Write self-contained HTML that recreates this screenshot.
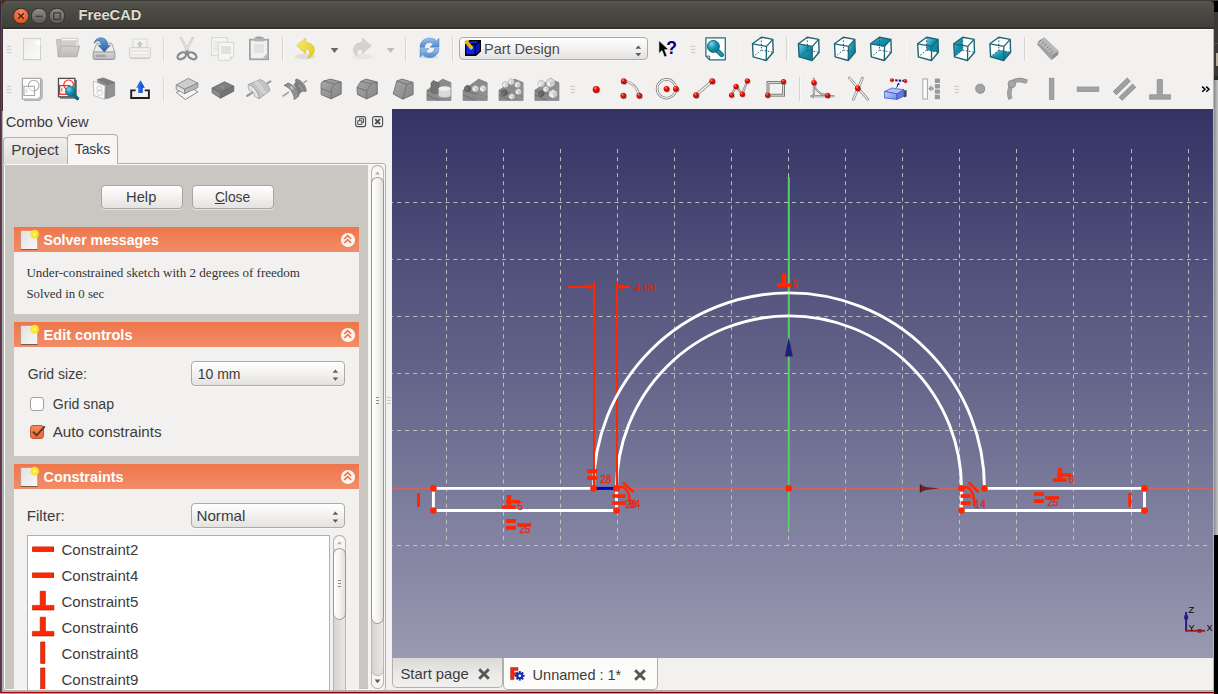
<!DOCTYPE html>
<html lang="en"><head><meta charset="utf-8"><title>FreeCAD</title>
<style>
html,body{margin:0;padding:0}
body{width:1218px;height:694px;overflow:hidden;position:relative;background:#3c3b37;font-family:"Liberation Sans",sans-serif;color:#3c3c3c}
.a{position:absolute;display:block}
.t{position:absolute;white-space:nowrap;line-height:1;font-family:"Liberation Sans",sans-serif}
.sf{font-family:"Liberation Serif",serif}
svg{overflow:visible}
.btn{position:absolute;border:1px solid #a9a6a0;border-radius:4px;background:linear-gradient(#ffffff,#f4f3f2 45%,#e4e2e0);box-sizing:border-box;box-shadow:0 1px 0 rgba(255,255,255,.5)}
.hdr{position:absolute;background:linear-gradient(#ee764a,#f28d68)}
.tb{position:absolute;background:#f2f1f0}
.sep{position:absolute;width:1px;background:#d6d4d1;box-shadow:1px 0 0 #fbfbfa}

</style></head>
<body>
<div class="a" style="left:0px;top:1px;width:1px;height:693px;background:linear-gradient(#33223c,#4e2c43 6%,#5b3045 25%,#5b3045)"></div>
<div class="a" style="left:1px;top:1px;width:1px;height:692px;background:#b52428"></div>
<div class="a" style="left:2px;top:1px;width:6px;height:6px;background:linear-gradient(135deg,#6a0000,#c00000)"></div>
<div class="a" style="left:1208px;top:1px;width:6px;height:6px;background:linear-gradient(225deg,#6a0000,#c00000)"></div>
<div class="a" style="left:2px;top:29px;width:1px;height:82px;background:#3a3330"></div>
<div class="a" style="left:2px;top:111px;width:1px;height:581px;background:#a9afab"></div>
<div class="a" style="left:1214px;top:1px;width:4px;height:11px;background:#000"></div>
<div class="a" style="left:1214px;top:12px;width:4px;height:68px;background:#3a3935"></div>
<div class="a" style="left:1214px;top:43px;width:4px;height:1px;background:#55544f"></div>
<div class="a" style="left:1214px;top:76px;width:4px;height:4px;background:#2a2926"></div>
<div class="a" style="left:1216px;top:53px;width:2px;height:13px;background:#b9ae9c"></div>
<div class="a" style="left:1214px;top:80px;width:4px;height:455px;background:linear-gradient(90deg,#8a8a8a,#c8c8c8)"></div>
<div class="a" style="left:1214px;top:535px;width:4px;height:159px;background:#000"></div>
<div class="a" style="left:2px;top:690px;width:1212px;height:2px;background:#adb1ad"></div>
<div class="a" style="left:1px;top:692px;width:1213px;height:1px;background:linear-gradient(90deg,#c00000,#8a0000 10%,#800000)"></div>
<div class="a" style="left:0px;top:693px;width:1214px;height:1px;background:#9aa6a6"></div>
<div class="a" style="left:2px;top:1px;width:1212px;height:28px;border-radius:5px 5px 0 0;background:linear-gradient(#4a4943,#5b5a54 4%,#504f49 10%,#403f3a 92%,#2e2d29 97%);"></div>
<svg class="a" style="left:12.399999999999999px;top:7.100000000000001px;" width="18" height="18" viewBox="0 0 18 18"><defs><radialGradient id="gc" cx="50%" cy="30%" r="70%"><stop offset="0" stop-color="#f58d6b"/><stop offset="1" stop-color="#df4f1d"/></radialGradient></defs><circle cx="9" cy="9" r="8.2" fill="#33322e"/><circle cx="9" cy="9" r="7.3" fill="url(#gc)"/><path d="M6.2 6.2 L11.8 11.8 M11.8 6.2 L6.2 11.8" stroke="#4a1c0c" stroke-width="1.25" fill="none"/></svg>
<svg class="a" style="left:30.4px;top:7.100000000000001px;" width="18" height="18" viewBox="0 0 18 18"><defs><linearGradient id="gmin" x1="0" y1="0" x2="0" y2="1"><stop offset="0" stop-color="#8d8c86"/><stop offset="1" stop-color="#5b5a55"/></linearGradient></defs><circle cx="9" cy="9" r="8.2" fill="#33322e"/><circle cx="9" cy="9" r="7.3" fill="url(#gmin)"/><path d="M5.6 9.3 H12.4" stroke="#3a3935" stroke-width="1.2" fill="none"/></svg>
<svg class="a" style="left:48.4px;top:7.100000000000001px;" width="18" height="18" viewBox="0 0 18 18"><defs><linearGradient id="gmax" x1="0" y1="0" x2="0" y2="1"><stop offset="0" stop-color="#8d8c86"/><stop offset="1" stop-color="#5b5a55"/></linearGradient></defs><circle cx="9" cy="9" r="8.2" fill="#33322e"/><circle cx="9" cy="9" r="7.3" fill="url(#gmax)"/><rect x="5.7" y="5.9" width="6.6" height="6.4" stroke="#3a3935" stroke-width="1.2" fill="none"/></svg>
<div class="t" style="left:78.60px;top:8px;font-size:14.7px;color:#dfdbd2;font-weight:bold;text-shadow:0 -1px 0 #2a2926;">FreeCAD</div>
<div class="a" style="left:3px;top:29px;width:1210px;height:661px;background:#f2f1f0;border-top:1px solid #fff;box-sizing:border-box"></div>
<div class="a" style="left:1213px;top:29px;width:1px;height:661px;background:#b7b5b1"></div>
<svg class="a" style="left:0px;top:0px;" width="1218" height="110" viewBox="0 0 1218 110"><defs>
<linearGradient id="gPaper" x1="0" y1="0" x2="1" y2="1"><stop offset="0" stop-color="#eeedec"/><stop offset="1" stop-color="#fafaf9"/></linearGradient>
<radialGradient id="gGlow"><stop offset="0" stop-color="#fff"/><stop offset=".4" stop-color="#fff" stop-opacity=".85"/><stop offset="1" stop-color="#fff" stop-opacity="0"/></radialGradient><linearGradient id="gFold" x1="0" y1="0" x2="0" y2="1"><stop offset="0" stop-color="#d2d1cf"/><stop offset="1" stop-color="#bcbbb9"/></linearGradient>
<linearGradient id="gBlueA" x1="0" y1="0" x2="0" y2="1"><stop offset="0" stop-color="#6f9fd8"/><stop offset="1" stop-color="#2a5ea8"/></linearGradient>
<linearGradient id="gRef" x1="0" y1="0" x2="0" y2="1"><stop offset="0" stop-color="#9cc0ea"/><stop offset="1" stop-color="#4d86cc"/></linearGradient>
<linearGradient id="gYel" x1="0" y1="0" x2="1" y2="1"><stop offset="0" stop-color="#f6ec78"/><stop offset="1" stop-color="#e2c914"/></linearGradient>
<linearGradient id="gTeal" x1="0" y1="0" x2="1" y2="1"><stop offset="0" stop-color="#7fd0f0"/><stop offset=".45" stop-color="#1792ae"/><stop offset="1" stop-color="#087c96"/></linearGradient>
<radialGradient id="gLens" cx="35%" cy="30%" r="75%"><stop offset="0" stop-color="#7fd4f2"/><stop offset=".5" stop-color="#1a94b0"/><stop offset="1" stop-color="#0b6f86"/></radialGradient>
<radialGradient id="gRed" cx="38%" cy="32%" r="70%"><stop offset="0" stop-color="#ff9a8a"/><stop offset=".35" stop-color="#f01808"/><stop offset="1" stop-color="#b00000"/></radialGradient>
<linearGradient id="gDrive" x1="0" y1="0" x2="0" y2="1"><stop offset="0" stop-color="#dcdcdc"/><stop offset="1" stop-color="#b4b4b4"/></linearGradient>
<linearGradient id="gUp" x1="0" y1="0" x2="1" y2="0"><stop offset="0" stop-color="#3a8af8"/><stop offset="1" stop-color="#0438b8"/></linearGradient>
<linearGradient id="gBox" x1="0" y1="0" x2="1" y2="1"><stop offset="0" stop-color="#c4d4fa"/><stop offset="1" stop-color="#6c8ae0"/></linearGradient>
<linearGradient id="gG1" x1="0" y1="0" x2="1" y2="1"><stop offset="0" stop-color="#a8a8a8"/><stop offset="1" stop-color="#858585"/></linearGradient>
</defs><rect x="6.8" y="45.8" width="4.4" height="1.2" fill="#cfcdca"/><rect x="6.8" y="48.9" width="4.4" height="1.2" fill="#cfcdca"/><rect x="6.8" y="52.0" width="4.4" height="1.2" fill="#cfcdca"/><rect x="6.8" y="85.8" width="4.4" height="1.2" fill="#cfcdca"/><rect x="6.8" y="88.9" width="4.4" height="1.2" fill="#cfcdca"/><rect x="6.8" y="92.0" width="4.4" height="1.2" fill="#cfcdca"/><rect x="690.8" y="45.8" width="4.4" height="1.2" fill="#cfcdca"/><rect x="690.8" y="48.9" width="4.4" height="1.2" fill="#cfcdca"/><rect x="690.8" y="52.0" width="4.4" height="1.2" fill="#cfcdca"/><rect x="570.6" y="85.8" width="4.4" height="1.2" fill="#cfcdca"/><rect x="570.6" y="88.9" width="4.4" height="1.2" fill="#cfcdca"/><rect x="570.6" y="92.0" width="4.4" height="1.2" fill="#cfcdca"/><rect x="954.6" y="85.8" width="4.4" height="1.2" fill="#cfcdca"/><rect x="954.6" y="88.9" width="4.4" height="1.2" fill="#cfcdca"/><rect x="954.6" y="92.0" width="4.4" height="1.2" fill="#cfcdca"/><rect x="163" y="37" width="1" height="24" fill="#d7d5d2"/><rect x="164" y="37" width="1" height="24" fill="#f9f9f8"/><rect x="282" y="37" width="1" height="24" fill="#d7d5d2"/><rect x="283" y="37" width="1" height="24" fill="#f9f9f8"/><rect x="405" y="37" width="1" height="24" fill="#d7d5d2"/><rect x="406" y="37" width="1" height="24" fill="#f9f9f8"/><rect x="452" y="37" width="1" height="24" fill="#d7d5d2"/><rect x="453" y="37" width="1" height="24" fill="#f9f9f8"/><rect x="740" y="37" width="1" height="24" fill="#d7d5d2"/><rect x="740" y="37" width="1" height="24" fill="#f9f9f8"/><rect x="786" y="37" width="1" height="24" fill="#d7d5d2"/><rect x="788" y="37" width="1" height="24" fill="#f9f9f8"/><rect x="906" y="37" width="1" height="24" fill="#d7d5d2"/><rect x="906" y="37" width="1" height="24" fill="#f9f9f8"/><rect x="1024" y="37" width="1" height="24" fill="#d7d5d2"/><rect x="1026" y="37" width="1" height="24" fill="#f9f9f8"/><rect x="163" y="77" width="1" height="24" fill="#d7d5d2"/><rect x="164" y="77" width="1" height="24" fill="#f9f9f8"/><rect x="799" y="77" width="1" height="24" fill="#d7d5d2"/><rect x="800" y="77" width="1" height="24" fill="#f9f9f8"/><rect x="22.2" y="59" width="19.6" height="1.6" fill="#dddcda" opacity=".7"/><rect x="23.5" y="38.5" width="17" height="21" fill="url(#gPaper)" stroke="#cfcecb" stroke-width="1"/><circle cx="38" cy="42.8" r="3.6" fill="url(#gGlow)"/><path d="M56.5 39.6 H61 V56.5 H58.2 Z" fill="#c9c8c6" stroke="#b4b3b1" stroke-width=".8"/><path d="M61.4 38.3 H77.8 V47 H61.4 Z" fill="#f6f6f5" stroke="#c4c3c1" stroke-width=".8"/><path d="M62 40.2 H77 L75.8 46 H60.5 Z" fill="#d0cfcd"/><path d="M60.9 46.2 H79.6 L76.9 56.8 H58 Z" fill="url(#gFold)" stroke="#a9a8a6" stroke-width=".8"/><path d="M96.9 43.2 H111.6 L114.9 52.4 H93.2 Z" fill="#ececec" stroke="#9a9a9a" stroke-width=".9"/><rect x="93.2" y="52" width="21.7" height="7.5" rx="1.4" fill="url(#gDrive)" stroke="#8e8e8e" stroke-width=".9"/><rect x="95.6" y="54.6" width="10" height="2.4" fill="#9c9c9c" opacity=".8"/><rect x="107.5" y="54" width="1.4" height="3.8" fill="#c9c9c9"/><rect x="109.8" y="54" width="1.4" height="3.8" fill="#c9c9c9"/><rect x="112" y="54" width="1.4" height="3.8" fill="#c9c9c9"/><path d="M94.2 43.6 C94.6 38.5 100.5 36.4 104.3 38.6 C107 40.2 107.7 42.8 107.6 45.3 H110.3 L104.3 51.9 L98 45.3 H101.2 C101.3 43 100.4 41.3 98.6 41 C96.8 40.7 95.2 41.6 94.2 43.6 Z" fill="url(#gBlueA)" stroke="#2f62a8" stroke-width=".5"/><rect x="133" y="39" width="13.8" height="10" fill="#f3f3f2" stroke="#d2d1cf" stroke-width=".8"/><path d="M139.9 41 L143.2 44.6 H141.3 V47.4 H138.5 V44.6 H136.6 Z" fill="#c9c8c6"/><rect x="129.3" y="47.4" width="21.2" height="11.2" rx="2.6" fill="#efeeed" stroke="#cfcecb" stroke-width=".9"/><rect x="131.4" y="51.6" width="17" height="2.6" rx="1.2" fill="#fbfbfb" stroke="#d6d5d3" stroke-width=".6"/><rect x="130.4" y="57.4" width="19" height="1.4" fill="#c4c3c1" opacity=".7"/><path d="M180.2 37.6 L181.6 37.4 L190 52.6 L187.8 53.4 Z" fill="#ededec" stroke="#bdbcba" stroke-width=".7"/><path d="M193.5 37.6 L192.1 37.4 L183.7 52.6 L185.9 53.4 Z" fill="#ededec" stroke="#bdbcba" stroke-width=".7"/><ellipse cx="181.8" cy="55.8" rx="4.6" ry="3" transform="rotate(-32 181.8 55.8)" fill="none" stroke="#8b8b8b" stroke-width="2.3"/><ellipse cx="192.2" cy="55.8" rx="4.6" ry="3" transform="rotate(32 192.2 55.8)" fill="none" stroke="#8b8b8b" stroke-width="2.3"/><path d="M185.2 51.8 L187 49.6 L188.8 51.8 L187 53.8 Z" fill="#8b8b8b"/><rect x="211.5" y="37.5" width="16" height="18.2" fill="#f3f3f2" stroke="#d3d2d0" stroke-width=".8"/><rect x="213.5" y="41.5" width="5" height=".7" fill="#dcdbd9"/><rect x="213.5" y="43.7" width="5" height=".7" fill="#dcdbd9"/><rect x="213.5" y="45.9" width="5" height=".7" fill="#dcdbd9"/><rect x="213.5" y="48.1" width="5" height=".7" fill="#dcdbd9"/><rect x="213.5" y="50.3" width="5" height=".7" fill="#dcdbd9"/><path d="M218.3 42.4 H233.7 V56.5 L229.8 60.4 H218.3 Z" fill="#f5f5f4" stroke="#cfcecb" stroke-width=".8"/><rect x="221" y="46" width="10" height="8" fill="#e1e0de"/><path d="M229.8 60.4 V56.5 H233.7 Z" fill="#d9d8d6"/><rect x="249.9" y="39.7" width="18.2" height="19.6" fill="#f1f1f0" stroke="#a3a3a3" stroke-width="1.8"/><rect x="254.4" y="37" width="9.4" height="4.4" rx="1" fill="#b3b3b3"/><rect x="256.4" y="36.6" width="5.4" height="1.6" fill="#9b9b9b"/><rect x="254" y="44" width="10" height="9" fill="#e3e2e0"/><path d="M262.4 58.4 L267.2 53.6 V58.4 Z" fill="#b9b9b9"/><ellipse cx="305.3" cy="56.6" rx="10.5" ry="2.8" fill="#cfcecb" opacity=".55"/><path d="M296.6 45.7 L305.7 38 V42.6 C311.5 42.6 314.6 46.2 314.4 50.2 C314.2 54.2 311 57.4 307 58.3 C309.6 55.8 310.3 52.6 309.2 50.8 C308.4 49.6 307.2 49.3 305.7 49.3 V53.7 Z" fill="url(#gYel)" stroke="#d8c21c" stroke-width=".6"/><path d="M330.7 48 H338.4 L334.55 53.1 Z" fill="#686868"/><ellipse cx="362.5" cy="56.6" rx="10.5" ry="2.6" fill="#dddcda" opacity=".5"/><path d="M371.3 45.7 L362.2 38 V42.6 C356.4 42.6 353.3 46.2 353.5 50.2 C353.6 52.6 355 54.6 357.4 55.6 C356.4 53.4 356.8 51.4 358.2 50.3 C359.3 49.5 360.7 49.3 362.2 49.3 V53.7 Z" fill="#d3d2d0" stroke="#c4c3c1" stroke-width=".5"/><path d="M386.8 48 H394.4 L390.6 53.1 Z" fill="#bdbcba"/><ellipse cx="429.5" cy="57.2" rx="9" ry="1.6" fill="#cfcecb" opacity=".6"/><path d="M420 47.4 C420 41.6 424.6 38 429.6 38 C432.4 38 434.8 39 436.4 40.8 L439 38.3 V47.2 H430 L433 44.2 C432.2 43.2 431 42.6 429.6 42.6 C426.8 42.6 424.7 44.6 424.6 47.4 Z" fill="url(#gRef)" stroke="#4a82c8" stroke-width=".5"/><path d="M439 48.4 C439 54.2 434.4 57.6 429.4 57.6 C426.6 57.6 424.2 56.6 422.6 54.8 L420 57.3 V48.6 H429 L426 51.5 C426.8 52.5 428 53 429.4 53 C432.2 53 434.3 51.2 434.4 48.4 Z" fill="url(#gRef)" stroke="#4a82c8" stroke-width=".5"/><path d="M658.9 40.6 V53.4 L662 50.6 L664.4 56.9 L667 55.9 L664.6 49.8 L668.6 49.6 Z" fill="#000" stroke="#fff" stroke-width=".6"/><text x="666.2" y="54" font-family="Liberation Sans, sans-serif" font-weight="bold" font-size="17.5" fill="#00007c" stroke="#fff" stroke-width=".4" paint-order="stroke">?</text><path d="M705.9 37.9 H725.3 V59.8 H709.6 L705.9 56.1 Z" fill="#fff" stroke="#226b7c" stroke-width="1.25" stroke-linejoin="round"/><path d="M706.6 56.1 H709.6 V59.4" fill="none" stroke="#226b7c" stroke-width="1"/><path d="M717.6 50.8 L721.7 54.9" stroke="#0f6d84" stroke-width="4.6" stroke-linecap="round"/><path d="M717.6 50.8 L721.7 54.9" stroke="#1e96b2" stroke-width="2.6" stroke-linecap="round"/><circle cx="713.4" cy="46.4" r="6" fill="url(#gLens)" stroke="#0f6377" stroke-width=".9"/><polygon points="761.4,37.2 772.8,39.4 773.2,52.3 766.2,60.5 753.2,56.8 752.5,43.8" fill="#fff"/><line x1="761.4" y1="37.2" x2="761.4" y2="50.1" stroke="#1c6474" stroke-width="1" stroke-dasharray="1.6 1.6"/><line x1="761.4" y1="50.1" x2="753.2" y2="56.8" stroke="#1c6474" stroke-width="1" stroke-dasharray="1.6 1.6"/><line x1="761.4" y1="50.1" x2="773.2" y2="52.3" stroke="#1c6474" stroke-width="1" stroke-dasharray="1.6 1.6"/><polygon points="761.4,37.2 772.8,39.4 773.2,52.3 766.2,60.5 753.2,56.8 752.5,43.8" fill="none" stroke="#1c6474" stroke-width="1.4" stroke-linejoin="round"/><line x1="752.5" y1="43.8" x2="766.5" y2="46.4" stroke="#1c6474" stroke-width="1.3"/><line x1="766.5" y1="46.4" x2="772.8" y2="39.4" stroke="#1c6474" stroke-width="1.3"/><line x1="766.5" y1="46.4" x2="766.2" y2="60.5" stroke="#1c6474" stroke-width="1.3"/><polygon points="807.3,37.2 818.7,39.4 819.1,52.3 812.1,60.5 799.1,56.8 798.4,43.8" fill="#fff"/><polygon points="798.4,43.8 812.4,46.4 812.1,60.5 799.1,56.8" fill="url(#gTeal)"/><line x1="807.3" y1="37.2" x2="807.3" y2="50.1" stroke="#1c6474" stroke-width="1" stroke-dasharray="1.6 1.6"/><line x1="807.3" y1="50.1" x2="799.1" y2="56.8" stroke="#1c6474" stroke-width="1" stroke-dasharray="1.6 1.6"/><line x1="807.3" y1="50.1" x2="819.1" y2="52.3" stroke="#1c6474" stroke-width="1" stroke-dasharray="1.6 1.6"/><polygon points="807.3,37.2 818.7,39.4 819.1,52.3 812.1,60.5 799.1,56.8 798.4,43.8" fill="none" stroke="#1c6474" stroke-width="1.4" stroke-linejoin="round"/><line x1="798.4" y1="43.8" x2="812.4" y2="46.4" stroke="#1c6474" stroke-width="1.3"/><line x1="812.4" y1="46.4" x2="818.7" y2="39.4" stroke="#1c6474" stroke-width="1.3"/><line x1="812.4" y1="46.4" x2="812.1" y2="60.5" stroke="#1c6474" stroke-width="1.3"/><polygon points="843.4,37.2 854.8,39.4 855.2,52.3 848.2,60.5 835.2,56.8 834.5,43.8" fill="#fff"/><polygon points="848.5,46.4 854.8,39.4 855.2,52.3 848.2,60.5" fill="url(#gTeal)"/><line x1="843.4" y1="37.2" x2="843.4" y2="50.1" stroke="#1c6474" stroke-width="1" stroke-dasharray="1.6 1.6"/><line x1="843.4" y1="50.1" x2="835.2" y2="56.8" stroke="#1c6474" stroke-width="1" stroke-dasharray="1.6 1.6"/><line x1="843.4" y1="50.1" x2="855.2" y2="52.3" stroke="#1c6474" stroke-width="1" stroke-dasharray="1.6 1.6"/><polygon points="843.4,37.2 854.8,39.4 855.2,52.3 848.2,60.5 835.2,56.8 834.5,43.8" fill="none" stroke="#1c6474" stroke-width="1.4" stroke-linejoin="round"/><line x1="834.5" y1="43.8" x2="848.5" y2="46.4" stroke="#1c6474" stroke-width="1.3"/><line x1="848.5" y1="46.4" x2="854.8" y2="39.4" stroke="#1c6474" stroke-width="1.3"/><line x1="848.5" y1="46.4" x2="848.2" y2="60.5" stroke="#1c6474" stroke-width="1.3"/><polygon points="879.5,37.2 890.9,39.4 891.3,52.3 884.3,60.5 871.3,56.8 870.6,43.8" fill="#fff"/><polygon points="879.5,37.2 890.9,39.4 884.6,46.4 870.6,43.8" fill="url(#gTeal)"/><line x1="879.5" y1="37.2" x2="879.5" y2="50.1" stroke="#1c6474" stroke-width="1" stroke-dasharray="1.6 1.6"/><line x1="879.5" y1="50.1" x2="871.3" y2="56.8" stroke="#1c6474" stroke-width="1" stroke-dasharray="1.6 1.6"/><line x1="879.5" y1="50.1" x2="891.3" y2="52.3" stroke="#1c6474" stroke-width="1" stroke-dasharray="1.6 1.6"/><polygon points="879.5,37.2 890.9,39.4 891.3,52.3 884.3,60.5 871.3,56.8 870.6,43.8" fill="none" stroke="#1c6474" stroke-width="1.4" stroke-linejoin="round"/><line x1="870.6" y1="43.8" x2="884.6" y2="46.4" stroke="#1c6474" stroke-width="1.3"/><line x1="884.6" y1="46.4" x2="890.9" y2="39.4" stroke="#1c6474" stroke-width="1.3"/><line x1="884.6" y1="46.4" x2="884.3" y2="60.5" stroke="#1c6474" stroke-width="1.3"/><polygon points="926.6,37.2 938.0,39.4 938.4,52.3 931.4,60.5 918.4,56.8 917.7,43.8" fill="#fff"/><polygon points="926.6,37.2 938.0,39.4 938.4,52.3 926.6,50.1" fill="url(#gTeal)"/><line x1="926.6" y1="37.2" x2="926.6" y2="50.1" stroke="#1c6474" stroke-width="1" stroke-dasharray="1.6 1.6"/><line x1="926.6" y1="50.1" x2="918.4" y2="56.8" stroke="#1c6474" stroke-width="1" stroke-dasharray="1.6 1.6"/><line x1="926.6" y1="50.1" x2="938.4" y2="52.3" stroke="#1c6474" stroke-width="1" stroke-dasharray="1.6 1.6"/><polygon points="926.6,37.2 938.0,39.4 938.4,52.3 931.4,60.5 918.4,56.8 917.7,43.8" fill="none" stroke="#1c6474" stroke-width="1.4" stroke-linejoin="round"/><line x1="917.7" y1="43.8" x2="931.7" y2="46.4" stroke="#1c6474" stroke-width="1.3"/><line x1="931.7" y1="46.4" x2="938.0" y2="39.4" stroke="#1c6474" stroke-width="1.3"/><line x1="931.7" y1="46.4" x2="931.4" y2="60.5" stroke="#1c6474" stroke-width="1.3"/><polygon points="962.7,37.2 974.1,39.4 974.5,52.3 967.5,60.5 954.5,56.8 953.8,43.8" fill="#fff"/><polygon points="953.8,43.8 962.7,37.2 962.7,50.1 954.5,56.8" fill="url(#gTeal)"/><line x1="962.7" y1="37.2" x2="962.7" y2="50.1" stroke="#1c6474" stroke-width="1" stroke-dasharray="1.6 1.6"/><line x1="962.7" y1="50.1" x2="954.5" y2="56.8" stroke="#1c6474" stroke-width="1" stroke-dasharray="1.6 1.6"/><line x1="962.7" y1="50.1" x2="974.5" y2="52.3" stroke="#1c6474" stroke-width="1" stroke-dasharray="1.6 1.6"/><polygon points="962.7,37.2 974.1,39.4 974.5,52.3 967.5,60.5 954.5,56.8 953.8,43.8" fill="none" stroke="#1c6474" stroke-width="1.4" stroke-linejoin="round"/><line x1="953.8" y1="43.8" x2="967.8" y2="46.4" stroke="#1c6474" stroke-width="1.3"/><line x1="967.8" y1="46.4" x2="974.1" y2="39.4" stroke="#1c6474" stroke-width="1.3"/><line x1="967.8" y1="46.4" x2="967.5" y2="60.5" stroke="#1c6474" stroke-width="1.3"/><polygon points="998.8,37.2 1010.2,39.4 1010.6,52.3 1003.6,60.5 990.6,56.8 989.9,43.8" fill="#fff"/><polygon points="990.6,56.8 1003.6,60.5 1010.6,52.3 998.8,50.1" fill="url(#gTeal)"/><line x1="998.8" y1="37.2" x2="998.8" y2="50.1" stroke="#1c6474" stroke-width="1" stroke-dasharray="1.6 1.6"/><line x1="998.8" y1="50.1" x2="990.6" y2="56.8" stroke="#1c6474" stroke-width="1" stroke-dasharray="1.6 1.6"/><line x1="998.8" y1="50.1" x2="1010.6" y2="52.3" stroke="#1c6474" stroke-width="1" stroke-dasharray="1.6 1.6"/><polygon points="998.8,37.2 1010.2,39.4 1010.6,52.3 1003.6,60.5 990.6,56.8 989.9,43.8" fill="none" stroke="#1c6474" stroke-width="1.4" stroke-linejoin="round"/><line x1="989.9" y1="43.8" x2="1003.9" y2="46.4" stroke="#1c6474" stroke-width="1.3"/><line x1="1003.9" y1="46.4" x2="1010.2" y2="39.4" stroke="#1c6474" stroke-width="1.3"/><line x1="1003.9" y1="46.4" x2="1003.6" y2="60.5" stroke="#1c6474" stroke-width="1.3"/><path d="M1037 44.6 L1038 42 L1052.4 54.6 L1051.4 60.3 Z" fill="#a2a2a2"/><path d="M1038 42 L1044.2 37.4 L1058.6 51.2 L1052.4 54.6 Z" fill="#b9b9b9" stroke="#a0a0a0" stroke-width=".5"/><path d="M1052.4 54.6 L1058.6 51.2 L1058 55 L1051.4 60.3 Z" fill="#8f8f8f"/><line x1="1041.5" y1="39.6" x2="1038.6" y2="41.8" stroke="#747474" stroke-width="1"/><line x1="1043.8" y1="41.9" x2="1042.1" y2="43.2" stroke="#747474" stroke-width="1"/><line x1="1046.2" y1="44.1" x2="1044.4" y2="45.4" stroke="#747474" stroke-width="1"/><line x1="1048.5" y1="46.4" x2="1046.8" y2="47.7" stroke="#747474" stroke-width="1"/><line x1="1050.9" y1="48.6" x2="1049.1" y2="49.9" stroke="#747474" stroke-width="1"/><line x1="1053.2" y1="50.9" x2="1050.4" y2="53.0" stroke="#747474" stroke-width="1"/><path d="M24 100.2 H39.5 L42 97.6 V80 H41" fill="none" stroke="#b4b4b4" stroke-width="1.6"/><path d="M22.4 78.4 H40.6 V96.6 L38 99.2 H22.4 Z" fill="#fff" stroke="#a9a9a9" stroke-width="1.3"/><circle cx="33.7" cy="85.6" r="5.3" fill="none" stroke="#a9a9a9" stroke-width="1.1"/><rect x="23.9" y="86.3" width="10.6" height="9.2" fill="#fff" fill-opacity=".5" stroke="#a9a9a9" stroke-width="1.1"/><path d="M26 88.6 V93.4 M27.2 89.6 V92.4" stroke="#cfcfcf" stroke-width=".8"/><path d="M60 98 H76 V80" fill="none" stroke="#6e6e6e" stroke-width="1.7"/><rect x="58.5" y="78.4" width="16.4" height="18.4" fill="#fff" stroke="#4c4c4c" stroke-width="1.3"/><circle cx="68.6" cy="84.8" r="4.8" fill="none" stroke="#ff2a14" stroke-width="1.2"/><rect x="59.6" y="85.6" width="10" height="8.6" fill="none" stroke="#ff2a14" stroke-width="1.3"/><path d="M61.8 87.8 V91.6" stroke="#555" stroke-width=".8"/><path d="M73.4 94.4 L77.4 98.4" stroke="#0f6d84" stroke-width="3.6" stroke-linecap="round"/><circle cx="70.4" cy="91.2" r="5" fill="url(#gLens)" stroke="#0f6377" stroke-width=".6"/><path d="M97.2 79.6 L103.4 77.9 L114.6 82.3 L107.5 84.9 Z" fill="#7c7c7c" stroke="#6a6a6a" stroke-width=".6"/><path d="M107.5 84.9 L114.6 82.3 V95.6 L107.5 98.6 Z" fill="#929292" stroke="#6f6f6f" stroke-width=".6"/><path d="M97.2 79.6 L107.5 84.9 V98.6 L104.6 99.2 V86 L97.2 82 Z" fill="#8a8a8a"/><path d="M93.2 81.2 L105.1 85.9 L104.5 99.2 L93.9 95.6 Z" fill="#fbfbfb" stroke="#b9b9b9" stroke-width=".9"/><circle cx="99.4" cy="88.6" r="2.6" fill="none" stroke="#c6c6c6" stroke-width=".8"/><circle cx="99.8" cy="92.6" r="2.8" fill="none" stroke="#c6c6c6" stroke-width=".8"/><path d="M135.6 90.4 H131.2 V98 H148.9 V90.4 H144.7" fill="#f2f1f0" stroke="#1d1d1d" stroke-width="1.9"/><path d="M140.5 80.2 L144.8 87.8 H142.7 V93 H138.2 V87.8 H136.1 Z" fill="url(#gUp)"/><path d="M176.2 92.4 L185.4 99.5 L197.9 91.9 L188.8 86.4 Z" fill="#f6f6f5" stroke="#7d7d7d" stroke-width=".9"/><path d="M176.2 84.9 L188.4 78.3 L197.9 83.1 L184.6 89.3 Z" fill="#cdcdcd" stroke="#808080" stroke-width=".8"/><path d="M176.2 84.9 L184.6 89.3 V93.8 L176.2 89.3 Z" fill="#e2e2e2" stroke="#808080" stroke-width=".8"/><path d="M184.6 89.3 L197.9 83.1 V87.5 L184.6 93.8 Z" fill="#b5b5b5" stroke="#808080" stroke-width=".8"/><path d="M212.1 88 L224.5 81.8 L233.8 86.2 L220.5 92.8 Z" fill="#7e7e7e" stroke="#646464" stroke-width=".8"/><path d="M212.1 88 L220.5 92.8 V98.2 L212.1 92.8 Z" fill="#8c8c8c" stroke="#646464" stroke-width=".8"/><path d="M220.5 92.8 L233.8 86.2 V91.2 L220.5 98.2 Z" fill="#747474" stroke="#646464" stroke-width=".8"/><path d="M219.6 86 L225.6 85.6 L222.8 89.4 Z" fill="#8f8f8f"/><path d="M247.3 95.8 L252.8 92.3 M267.2 83.3 L270.3 81.3" stroke="#9c9c9c" stroke-width="2.2" stroke-linecap="round"/><path d="M248.3 84.6 L260.1 79.5 C265.4 81.4 269.4 86 269.9 90.7 L259.2 98.7 C258.6 92.6 254.6 86.6 248.3 84.6 Z" fill="#c4c4c4" stroke="#9a9a9a" stroke-width=".8" stroke-linejoin="round"/><path d="M254 82.2 L263.6 94.8 L266.4 92.8 L257.6 80.8 Z" fill="#dadada" opacity=".7"/><path d="M248.3 84.6 C254.6 86.6 258.6 92.6 259.2 98.7 L254.4 96.2 C254.6 94.6 254.4 93.6 253.8 93 C252.6 91.4 251 90.6 249.2 90.4 C248.4 88.4 248.1 86.6 248.3 84.6 Z" fill="#e6e6e6" stroke="#9a9a9a" stroke-width=".8" stroke-linejoin="round"/><path d="M283.2 96 L288.4 92.3 M304.2 82.4 L306.4 80.9" stroke="#a0a0a0" stroke-width="1.6" stroke-linecap="round"/><path d="M296.1 79 C301.6 80 305.6 85 306.3 91 L304.6 91.6 C303.6 86.6 300.6 82.6 295.4 80.6 Z" fill="#8e8e8e" stroke="#6c6c6c" stroke-width=".7"/><path d="M293.4 84.8 C295 83.6 295.8 81.6 295.4 80 C300.8 82.2 303.8 86.4 304.6 91.4 C302 91.2 299.6 93 298.7 96.2 C298 91.6 296 87.6 293.4 84.8 Z" fill="#7e7e7e"/><path d="M298.6 84.6 C300.6 86.4 302 88.4 302.8 90.8" fill="none" stroke="#9a9a9a" stroke-width="1.6"/><path d="M284.1 85.4 L288 83.1 C294.4 85.4 298.2 90.6 298.7 96.2 L294.2 99.6 C293.4 93.4 289.8 88.2 284.1 85.4 Z" fill="#909090" stroke="#6a6a6a" stroke-width=".8" stroke-linejoin="round"/><path d="M290.4 86.2 L293 89.4" stroke="#c4c4c4" stroke-width="2.6" opacity=".85"/><path d="M285 86.8 C289.8 89.6 292.4 93.6 293.2 98.2" fill="none" stroke="#f2f2f2" stroke-width="1.3"/><path d="M321.1 88.5 V85 C321.1 82.6 322 81.6 323.6 81 L330.6 79.1 L341.2 82 V93.9 L331.2 98.9 L321.1 94.5 Z" fill="url(#gG1)" stroke="#666" stroke-width=".8" stroke-linejoin="round"/><path d="M321.1 88.5 L331.2 92.1 V98.9 M331.2 92.1 C331.4 87 333 83.6 341.2 82 M323.6 81 L334.6 84" fill="none" stroke="#666" stroke-width=".7"/><path d="M357 87.4 L360.7 81.5 L366.1 79.1 L377.3 82 V93.9 L366.7 98.9 L357.4 94.5 Z" fill="url(#gG1)" stroke="#666" stroke-width=".8" stroke-linejoin="round"/><path d="M357 87.4 L366.7 90.9 V98.9 M366.7 90.9 L371.4 83.8 L377.3 82 M360.7 81.5 L371.4 83.8" fill="none" stroke="#666" stroke-width=".7"/><path d="M393.2 93.9 L396.8 80.9 L402.1 79.1 L413.1 82.4 V94.5 L402.7 99.2 Z" fill="url(#gG1)" stroke="#666" stroke-width=".8" stroke-linejoin="round"/><path d="M396.8 80.9 L406.8 84.4 L402.7 99.2 M406.8 84.4 L413.1 82.4" fill="none" stroke="#666" stroke-width=".7"/><path d="M426.9 100.4 V90.3 L442.5 79.1 L451.0 82.6 V100.4 Z" fill="#8b8b8b" stroke="#777" stroke-width=".6"/><path d="M426.9 90.3 L451.0 97 M426.9 95 L438.9 100.2" stroke="#6c6c6c" stroke-width=".9" fill="none"/><path d="M451.0 82.6 V100.4 L438.9 96 Z" fill="#959595" opacity=".6"/><path d="M431 83 L433.2 80.4 L439 83 V91.6 L434 93.6 L431 91.6 Z" fill="#747474" stroke="#5e5e5e" stroke-width=".6"/><path d="M438.6 89 C438.6 86.4 450.6 86.4 450.6 89 V95.4 C450.6 98.2 438.6 98.2 438.6 95.4 Z" fill="#dadada" stroke="#a8a8a8" stroke-width=".5"/><ellipse cx="444.6" cy="88.6" rx="6" ry="2.3" fill="#f0f0f0"/><path d="M463.1 100.4 V90.3 L478.70000000000005 79.1 L487.20000000000005 82.6 V100.4 Z" fill="#8b8b8b" stroke="#777" stroke-width=".6"/><path d="M463.1 90.3 L487.20000000000005 97 M463.1 95 L475.1 100.2" stroke="#6c6c6c" stroke-width=".9" fill="none"/><path d="M487.20000000000005 82.6 V100.4 L475.1 96 Z" fill="#959595" opacity=".6"/><path d="M464.8 87.0 L467.6 85.3 L470.4 87.0 V90.1 L467.6 91.8 L464.8 90.1 Z" fill="none" stroke="#555" stroke-width="1"/><path d="M464.8 87.0 L467.6 85.3 L470.4 87.0 L467.6 88.7 Z" fill="#666"/><path d="M464.8 87.0 L467.6 88.7 V91.8 L464.8 90.1 Z" fill="#707070"/><path d="M470.4 87.0 L467.6 88.7 V91.8 L470.4 90.1 Z" fill="#5c5c5c"/><path d="M472.5 87.1 L475.4 85.4 L478.3 87.1 V90.3 L475.4 92.1 L472.5 90.3 Z" fill="none" stroke="#9a9a9a" stroke-width="1"/><path d="M472.5 87.1 L475.4 85.4 L478.3 87.1 L475.4 88.9 Z" fill="#dedede"/><path d="M472.5 87.1 L475.4 88.9 V92.1 L472.5 90.3 Z" fill="#f1f1f1"/><path d="M478.3 87.1 L475.4 88.9 V92.1 L478.3 90.3 Z" fill="#cfcfcf"/><path d="M480.1 87.0 L483.0 85.2 L485.9 87.0 V90.1 L483.0 91.9 L480.1 90.1 Z" fill="none" stroke="#9a9a9a" stroke-width="1"/><path d="M480.1 87.0 L483.0 85.2 L485.9 87.0 L483.0 88.7 Z" fill="#dedede"/><path d="M480.1 87.0 L483.0 88.7 V91.9 L480.1 90.1 Z" fill="#f1f1f1"/><path d="M485.9 87.0 L483.0 88.7 V91.9 L485.9 90.1 Z" fill="#cfcfcf"/><path d="M499 100.4 V90.3 L514.6 79.1 L523.1 82.6 V100.4 Z" fill="#8b8b8b" stroke="#777" stroke-width=".6"/><path d="M499 90.3 L523.1 97 M499 95 L511 100.2" stroke="#6c6c6c" stroke-width=".9" fill="none"/><path d="M523.1 82.6 V100.4 L511 96 Z" fill="#959595" opacity=".6"/><path d="M502.7 83.2 L505.4 81.6 L508.1 83.2 V86.2 L505.4 87.8 L502.7 86.2 Z" fill="none" stroke="#9a9a9a" stroke-width="1"/><path d="M502.7 83.2 L505.4 81.6 L508.1 83.2 L505.4 84.9 Z" fill="#dedede"/><path d="M502.7 83.2 L505.4 84.9 V87.8 L502.7 86.2 Z" fill="#f1f1f1"/><path d="M508.1 83.2 L505.4 84.9 V87.8 L508.1 86.2 Z" fill="#cfcfcf"/><path d="M508.7 80.5 L511.4 78.8 L514.1 80.5 V83.4 L511.4 85.0 L508.7 83.4 Z" fill="none" stroke="#9a9a9a" stroke-width="1"/><path d="M508.7 80.5 L511.4 78.8 L514.1 80.5 L511.4 82.1 Z" fill="#dedede"/><path d="M508.7 80.5 L511.4 82.1 V85.0 L508.7 83.4 Z" fill="#f1f1f1"/><path d="M514.1 80.5 L511.4 82.1 V85.0 L514.1 83.4 Z" fill="#cfcfcf"/><path d="M514.9 83.2 L517.6 81.6 L520.3 83.2 V86.2 L517.6 87.8 L514.9 86.2 Z" fill="none" stroke="#9a9a9a" stroke-width="1"/><path d="M514.9 83.2 L517.6 81.6 L520.3 83.2 L517.6 84.9 Z" fill="#dedede"/><path d="M514.9 83.2 L517.6 84.9 V87.8 L514.9 86.2 Z" fill="#f1f1f1"/><path d="M520.3 83.2 L517.6 84.9 V87.8 L520.3 86.2 Z" fill="#cfcfcf"/><path d="M515.7 90.2 L518.4 88.6 L521.1 90.2 V93.2 L518.4 94.8 L515.7 93.2 Z" fill="none" stroke="#9a9a9a" stroke-width="1"/><path d="M515.7 90.2 L518.4 88.6 L521.1 90.2 L518.4 91.9 Z" fill="#dedede"/><path d="M515.7 90.2 L518.4 91.9 V94.8 L515.7 93.2 Z" fill="#f1f1f1"/><path d="M521.1 90.2 L518.4 91.9 V94.8 L521.1 93.2 Z" fill="#cfcfcf"/><path d="M509.1 95.1 L511.8 93.4 L514.5 95.1 V98.0 L511.8 99.6 L509.1 98.0 Z" fill="none" stroke="#9a9a9a" stroke-width="1"/><path d="M509.1 95.1 L511.8 93.4 L514.5 95.1 L511.8 96.7 Z" fill="#dedede"/><path d="M509.1 95.1 L511.8 96.7 V99.6 L509.1 98.0 Z" fill="#f1f1f1"/><path d="M514.5 95.1 L511.8 96.7 V99.6 L514.5 98.0 Z" fill="#cfcfcf"/><path d="M501.7 91.2 L504.4 89.6 L507.1 91.2 V94.2 L504.4 95.8 L501.7 94.2 Z" fill="none" stroke="#555" stroke-width="1"/><path d="M501.7 91.2 L504.4 89.6 L507.1 91.2 L504.4 92.9 Z" fill="#666"/><path d="M501.7 91.2 L504.4 92.9 V95.8 L501.7 94.2 Z" fill="#707070"/><path d="M507.1 91.2 L504.4 92.9 V95.8 L507.1 94.2 Z" fill="#5c5c5c"/><path d="M534.9 100.4 V90.3 L550.5 79.1 L559.0 82.6 V100.4 Z" fill="#8b8b8b" stroke="#777" stroke-width=".6"/><path d="M534.9 90.3 L559.0 97 M534.9 95 L546.9 100.2" stroke="#6c6c6c" stroke-width=".9" fill="none"/><path d="M559.0 82.6 V100.4 L546.9 96 Z" fill="#959595" opacity=".6"/><path d="M538.3 82.0 L541.4 80.2 L544.5 82.0 V85.5 L541.4 87.3 L538.3 85.5 Z" fill="none" stroke="#9a9a9a" stroke-width="1"/><path d="M538.3 82.0 L541.4 80.2 L544.5 82.0 L541.4 83.9 Z" fill="#dedede"/><path d="M538.3 82.0 L541.4 83.9 V87.3 L538.3 85.5 Z" fill="#f1f1f1"/><path d="M544.5 82.0 L541.4 83.9 V87.3 L544.5 85.5 Z" fill="#cfcfcf"/><path d="M546.6 80.6 L550.6 78.2 L554.6 80.6 V85.0 L550.6 87.4 L546.6 85.0 Z" fill="none" stroke="#9a9a9a" stroke-width="1"/><path d="M546.6 80.6 L550.6 78.2 L554.6 80.6 L550.6 83.0 Z" fill="#dedede"/><path d="M546.6 80.6 L550.6 83.0 V87.4 L546.6 85.0 Z" fill="#f1f1f1"/><path d="M554.6 80.6 L550.6 83.0 V87.4 L554.6 85.0 Z" fill="#cfcfcf"/><path d="M543.4 87.7 L546.0 86.1 L548.6 87.7 V90.6 L546.0 92.1 L543.4 90.6 Z" fill="none" stroke="#9a9a9a" stroke-width="1"/><path d="M543.4 87.7 L546.0 86.1 L548.6 87.7 L546.0 89.3 Z" fill="#dedede"/><path d="M543.4 87.7 L546.0 89.3 V92.1 L543.4 90.6 Z" fill="#f1f1f1"/><path d="M548.6 87.7 L546.0 89.3 V92.1 L548.6 90.6 Z" fill="#cfcfcf"/><path d="M549.2 91.7 L553.0 89.4 L556.8 91.7 V95.9 L553.0 98.2 L549.2 95.9 Z" fill="none" stroke="#9a9a9a" stroke-width="1"/><path d="M549.2 91.7 L553.0 89.4 L556.8 91.7 L553.0 94.0 Z" fill="#dedede"/><path d="M549.2 91.7 L553.0 94.0 V98.2 L549.2 95.9 Z" fill="#f1f1f1"/><path d="M556.8 91.7 L553.0 94.0 V98.2 L556.8 95.9 Z" fill="#cfcfcf"/><path d="M538.6 92.3 L541.2 90.7 L543.8 92.3 V95.2 L541.2 96.7 L538.6 95.2 Z" fill="none" stroke="#555" stroke-width="1"/><path d="M538.6 92.3 L541.2 90.7 L543.8 92.3 L541.2 93.9 Z" fill="#666"/><path d="M538.6 92.3 L541.2 93.9 V96.7 L538.6 95.2 Z" fill="#707070"/><path d="M543.8 92.3 L541.2 93.9 V96.7 L543.8 95.2 Z" fill="#5c5c5c"/><circle cx="596.8" cy="90.2" r="3.4" fill="#6a6a6a" opacity=".55"/><circle cx="596.1" cy="89.4" r="3.4" fill="url(#gRed)"/><path d="M623.7 81.2 C631 81.6 637 87 639.3 95.6" fill="none" stroke="#7f7f7f" stroke-width="2.6" stroke-linecap="round"/><path d="M623.7 81.2 C631 81.6 637 87 639.3 95.6" fill="none" stroke="#f4f4f4" stroke-width="1.2" stroke-linecap="round"/><circle cx="624.4" cy="82.0" r="2.9" fill="#6a6a6a" opacity=".55"/><circle cx="623.7" cy="81.2" r="2.9" fill="url(#gRed)"/><circle cx="624.0" cy="96.4" r="2.9" fill="#6a6a6a" opacity=".55"/><circle cx="623.3" cy="95.6" r="2.9" fill="url(#gRed)"/><circle cx="640.0" cy="96.4" r="2.9" fill="#6a6a6a" opacity=".55"/><circle cx="639.3" cy="95.6" r="2.9" fill="url(#gRed)"/><circle cx="666.5" cy="88.8" r="9.4" fill="none" stroke="#7f7f7f" stroke-width="2.6"/><circle cx="666.5" cy="88.8" r="9.4" fill="none" stroke="#f4f4f4" stroke-width="1.2"/><circle cx="667.2" cy="89.6" r="2.9" fill="#6a6a6a" opacity=".55"/><circle cx="666.5" cy="88.8" r="2.9" fill="url(#gRed)"/><circle cx="676.6" cy="89.6" r="2.9" fill="#6a6a6a" opacity=".55"/><circle cx="675.9" cy="88.8" r="2.9" fill="url(#gRed)"/><path d="M696 95.2 L712.2 81.2" fill="none" stroke="#7f7f7f" stroke-width="3" stroke-linecap="round"/><path d="M696 95.2 L712.2 81.2" fill="none" stroke="#f4f4f4" stroke-width="1.6" stroke-linecap="round"/><circle cx="696.7" cy="96.0" r="2.9" fill="#6a6a6a" opacity=".55"/><circle cx="696.0" cy="95.2" r="2.9" fill="url(#gRed)"/><circle cx="712.9" cy="82.0" r="2.9" fill="#6a6a6a" opacity=".55"/><circle cx="712.2" cy="81.2" r="2.9" fill="url(#gRed)"/><path d="M731.5 95 L736 86.4 L742.3 94.2 L747.3 80.8" fill="none" stroke="#7f7f7f" stroke-width="2.2" stroke-linecap="round"/><path d="M731.5 95 L736 86.4 L742.3 94.2 L747.3 80.8" fill="none" stroke="#f4f4f4" stroke-width="0.8" stroke-linecap="round"/><circle cx="732.2" cy="95.8" r="2.6" fill="#6a6a6a" opacity=".55"/><circle cx="731.5" cy="95.0" r="2.6" fill="url(#gRed)"/><circle cx="736.7" cy="87.2" r="2.6" fill="#6a6a6a" opacity=".55"/><circle cx="736.0" cy="86.4" r="2.6" fill="url(#gRed)"/><circle cx="743.0" cy="95.0" r="2.6" fill="#6a6a6a" opacity=".55"/><circle cx="742.3" cy="94.2" r="2.6" fill="url(#gRed)"/><circle cx="748.0" cy="81.6" r="2.6" fill="#6a6a6a" opacity=".55"/><circle cx="747.3" cy="80.8" r="2.6" fill="url(#gRed)"/><rect x="768" y="82.4" width="15.6" height="12.8" fill="none" stroke="#6f6f6f" stroke-width="2.8"/><rect x="768" y="82.4" width="15.6" height="12.8" fill="none" stroke="#e6e6e6" stroke-width="1"/><circle cx="768.3" cy="96.0" r="2.6" fill="#6a6a6a" opacity=".55"/><circle cx="767.6" cy="95.2" r="2.6" fill="url(#gRed)"/><circle cx="784.1" cy="82.4" r="2.6" fill="#6a6a6a" opacity=".55"/><circle cx="783.4" cy="81.6" r="2.6" fill="url(#gRed)"/><path d="M813.9 78.8 V96.2 M811.4 96.2 H833.4" fill="none" stroke="#7f7f7f" stroke-width="2.2" stroke-linecap="round"/><path d="M813.9 78.8 V96.2 M811.4 96.2 H833.4" fill="none" stroke="#f4f4f4" stroke-width="0.8" stroke-linecap="round"/><path d="M813.9 82.6 C815 90 820 95 827.5 95.4" fill="none" stroke="#7f7f7f" stroke-width="2" stroke-linecap="round"/><path d="M813.9 82.6 C815 90 820 95 827.5 95.4" fill="none" stroke="#f4f4f4" stroke-width="0.6" stroke-linecap="round"/><path d="M811 96.2 L814 93.6 V98.8 Z" fill="#9a9a9a"/><circle cx="814.6" cy="83.4" r="2.7" fill="#6a6a6a" opacity=".55"/><circle cx="813.9" cy="82.6" r="2.7" fill="url(#gRed)"/><circle cx="828.2" cy="96.2" r="2.7" fill="#6a6a6a" opacity=".55"/><circle cx="827.5" cy="95.4" r="2.7" fill="url(#gRed)"/><path d="M849.4 78 L867.6 99.2" fill="none" stroke="#7f7f7f" stroke-width="2.6" stroke-linecap="round"/><path d="M849.4 78 L867.6 99.2" fill="none" stroke="#f4f4f4" stroke-width="1.2" stroke-linecap="round"/><path d="M862.4 78.2 L853.4 99.2" fill="none" stroke="#7f7f7f" stroke-width="2.6" stroke-linecap="round"/><path d="M862.4 78.2 L853.4 99.2" fill="none" stroke="#f4f4f4" stroke-width="1.2" stroke-linecap="round"/><circle cx="858.4" cy="89.1" r="2.8" fill="#6a6a6a" opacity=".55"/><circle cx="857.7" cy="88.3" r="2.8" fill="url(#gRed)"/><path d="M904 90.6 L906.6 90 V96.6 L904 97.6 Z" fill="#4a4a4a"/><path d="M884.5 91.5 L891.6 88 L904 89.7 L896.9 93.9 Z" fill="#a9bef2" stroke="#3b4bd0" stroke-width=".7"/><path d="M884.5 91.5 L896.9 93.9 V99.4 L884.5 98 Z" fill="url(#gBox)" stroke="#3b4bd0" stroke-width=".7"/><path d="M896.9 93.9 L904 89.7 V96.2 L896.9 99.4 Z" fill="#5f7cd6" stroke="#3b4bd0" stroke-width=".7"/><path d="M891.6 80 L905.2 80.9" stroke="#10108c" stroke-width="2" stroke-dasharray="2.4 1.2"/><path d="M896.6 87.6 L898.4 83.6" stroke="#10108c" stroke-width="1"/><path d="M897 84.2 L899.2 82.6 L899.4 85.2 Z" fill="#10108c"/><circle cx="892.3" cy="80.8" r="1.8" fill="#6a6a6a" opacity=".55"/><circle cx="891.6" cy="80.0" r="1.8" fill="url(#gRed)"/><circle cx="905.9" cy="81.7" r="1.8" fill="#6a6a6a" opacity=".55"/><circle cx="905.2" cy="80.9" r="1.8" fill="url(#gRed)"/><rect x="922.8" y="79" width="4.6" height="20" fill="#fbfbfb" stroke="#a6a6a6" stroke-width="1"/><rect x="934.8" y="78.6" width="5.2" height="4.4" rx=".8" fill="#999"/><rect x="934.8" y="84.0" width="5.2" height="4.4" rx=".8" fill="#999"/><rect x="934.8" y="89.4" width="5.2" height="4.4" rx=".8" fill="#999"/><rect x="934.8" y="94.8" width="5.2" height="4.4" rx=".8" fill="#999"/><path d="M928.2 88.4 L931 85.6 V91.2 Z M934.2 88.4 L931.4 85.6 V91.2 Z" fill="#9c9c9c"/><circle cx="980.5" cy="89.1" r="4.6" fill="#8a8a8a"/><circle cx="980.1" cy="88.6" r="4.6" fill="#a3a3a3" stroke="#8c8c8c" stroke-width=".7"/><path d="M1027 81.8 C1019 78.4 1012 80 1010.6 86.6 C1009 91.4 1008.6 95.4 1010.6 99" fill="none" stroke="#8c8c8c" stroke-width="4.4"/><path d="M1027 81.8 C1019 78.4 1012 80 1010.6 86.6 C1009 91.4 1008.6 95.4 1010.6 99" fill="none" stroke="#a3a3a3" stroke-width="3.2"/><circle cx="1011.8" cy="84" r="3.8" fill="#a6a6a6" stroke="#8a8a8a" stroke-width=".8"/><rect x="1049.3" y="78.2" width="4.6" height="21.4" fill="#a1a1a1" stroke="#8c8c8c" stroke-width=".7"/><rect x="1077.2" y="87" width="21.6" height="4.6" fill="#a1a1a1" stroke="#8c8c8c" stroke-width=".7"/><path d="M1114.6 93.4 L1129 79.4 M1120.4 99 L1134.4 85.4" stroke="#8c8c8c" stroke-width="5"/><path d="M1115 93 L1128.6 79.8 M1120.8 98.6 L1134 85.8" stroke="#a1a1a1" stroke-width="3.6"/><path d="M1157.2 79.5 H1162.4 V94.7 H1170.6 V99.2 H1149.6 V94.7 H1157.2 Z" fill="#a1a1a1" stroke="#8c8c8c" stroke-width=".7"/><path d="M1202.2 86.6 L1205 89.2 L1202.2 91.8 M1206.2 86.6 L1209 89.2 L1206.2 91.8" fill="none" stroke="#000" stroke-width="1.5"/></svg>
<div class="btn" style="left:459px;top:37px;width:189px;height:23px;border-color:#aeaba5"></div>
<svg class="a" style="left:464px;top:38px;" width="20" height="20" viewBox="0 0 20 20"><path d="M1 6 L5.4 1.9 H17 V13.6 L12 17.9 H1 Z" fill="#000"/>
<path d="M2.3 7 H10.5 V16.3 H2.3 Z" fill="#0a24f0"/><path d="M3.6 5.5 L6.3 3.3 H15 L12 5.5 Z" fill="#0a24f0"/><path d="M12 7 L15.8 4 V12.8 L12 16.2 Z" fill="#0418c4"/>
<path d="M1.6 2.6 L7.6 10.2" stroke="#e4b414" stroke-width="3.6"/><path d="M6.8 9.2 L8.2 11" stroke="#b9b9b9" stroke-width="3"/></svg>
<div class="t" style="left:484.00px;top:42px;font-size:14.5px;color:#4c4c4c;">Part Design</div>
<svg class="a" style="left:634px;top:44px;" width="10" height="14" viewBox="0 0 10 14"><path d="M1.4 4.8 L4.3 1.4 L7.2 4.8 Z M1.4 9 L4.3 12.4 L7.2 9 Z" fill="#5c5c5c"/></svg>
<div class="t" style="left:5.70px;top:115px;font-size:14.7px;color:#3c3c3c;">Combo View</div>
<svg class="a" style="left:355px;top:116px;" width="12" height="12" viewBox="0 0 12 12"><rect x=".6" y=".6" width="10" height="10" rx="2" fill="none" stroke="#4e4e4e" stroke-width="1.1"/><rect x="4.6" y="2.8" width="4" height="3.6" fill="none" stroke="#4e4e4e" stroke-width="1"/><rect x="2.8" y="4.8" width="4" height="3.6" fill="#f2f1f0" stroke="#4e4e4e" stroke-width="1"/></svg>
<svg class="a" style="left:372px;top:116px;" width="12" height="12" viewBox="0 0 12 12"><rect x=".6" y=".6" width="10" height="10" rx="2" fill="none" stroke="#4e4e4e" stroke-width="1.1"/><path d="M3.2 3.2 L8 8 M8 3.2 L3.2 8" stroke="#4e4e4e" stroke-width="1.9"/></svg>
<div class="a" style="left:3px;top:163px;width:383px;height:528px;box-sizing:border-box;border:1px solid #b3b0ab;border-radius:3px;background:#fbfbfa"></div>
<div class="a" style="left:3px;top:137px;width:65px;height:27px;box-sizing:border-box;border:1px solid #b3b0ab;border-bottom:none;border-radius:4px 4px 0 0;background:linear-gradient(#f1f0ee,#dfddda)"></div>
<div class="a" style="left:67px;top:134px;width:51px;height:30px;box-sizing:border-box;border:1px solid #b3b0ab;border-bottom:none;border-radius:4px 4px 0 0;background:#f7f6f5"></div>
<div class="a" style="left:68px;top:163px;width:49px;height:1px;background:#f7f6f5"></div>
<div class="t" style="left:11.20px;top:142px;font-size:15.3px;color:#3c3c3c;">Project</div>
<div class="t" style="left:74.70px;top:143px;font-size:13.9px;color:#3c3c3c;">Tasks</div>
<div class="a" style="left:5px;top:165px;width:363px;height:523px;background:#cac7c3"></div>
<div class="a" style="left:5px;top:688px;width:363px;height:1px;background:#c2bfba"></div>
<div class="a" style="left:368px;top:165px;width:17px;height:524px;background:#f6f5f4"></div>
<div class="a" style="left:371px;top:165px;width:13px;height:524px;box-sizing:border-box;border:1px solid #b9b6b1;border-radius:6.5px;background:linear-gradient(90deg,#d6d4d0,#e9e8e6)"></div>
<div class="a" style="left:371px;top:165px;width:13px;height:13px;border-radius:6.5px 6.5px 0 0;background:#f7f6f5;box-sizing:border-box;border:1px solid #b9b6b1;border-bottom:none"></div>
<div class="a" style="left:371px;top:668px;width:13px;height:21px;border-radius:0 0 6.5px 6.5px;background:#f7f6f5;box-sizing:border-box;border:1px solid #b9b6b1;border-top:none"></div>
<div class="a" style="left:371px;top:624px;width:13px;height:52px;box-sizing:border-box;border:1px solid #b9b6b1;border-top:none;border-radius:0 0 6.5px 6.5px;background:linear-gradient(90deg,#d6d4d0,#e9e8e6)"></div>
<div class="a" style="left:371px;top:177px;width:13px;height:447px;box-sizing:border-box;border:1px solid #9b9893;border-radius:6.5px;background:linear-gradient(90deg,#ffffff,#f3f2f1 55%,#e3e1de)"></div>
<svg class="a" style="left:371px;top:165.5px;" width="13" height="13" viewBox="0 0 13 13"><path d="M4 8.4 L6.5 5.6 L9 8.4 Z" fill="#b5b2ad"/></svg>
<svg class="a" style="left:371px;top:676px;" width="13" height="13" viewBox="0 0 13 13"><path d="M3.6 3.6 L6.5 7.2 L9.4 3.6 Z" fill="#5c5c5c"/></svg>
<div class="a" style="left:376px;top:397px;width:3px;height:1px;background:#8f8c88"></div>
<div class="a" style="left:376px;top:400px;width:3px;height:1px;background:#8f8c88"></div>
<div class="a" style="left:376px;top:403px;width:3px;height:1px;background:#8f8c88"></div>
<div class="a" style="left:387px;top:397px;width:4px;height:1px;background:#cbc9c5"></div>
<div class="a" style="left:387px;top:400px;width:4px;height:1px;background:#cbc9c5"></div>
<div class="a" style="left:387px;top:403px;width:4px;height:1px;background:#cbc9c5"></div>
<div class="btn" style="left:100.5px;top:185px;width:82px;height:24px"></div>
<div class="btn" style="left:191.5px;top:185px;width:82px;height:24px"></div>
<div class="t" style="left:126.10px;top:190px;font-size:14.7px;color:#3c3c3c;">Help</div>
<div class="t" style="left:214.90px;top:191px;font-size:13.8px;color:#3c3c3c;"><span style="text-decoration:underline">C</span>lose</div>
<div class="hdr" style="left:14px;top:227px;width:345px;height:24.8px"></div>
<svg class="a" style="left:19px;top:229px;" width="22" height="22" viewBox="0 0 22 22"><defs><linearGradient id="hp" x1="0" y1="0" x2="1" y2="1"><stop offset="0" stop-color="#e0e0e0"/><stop offset="1" stop-color="#f8f8f8"/></linearGradient><radialGradient id="hy"><stop offset="0" stop-color="#fffde8"/><stop offset=".3" stop-color="#f9ec2c"/><stop offset=".7" stop-color="#f6e424" stop-opacity=".9"/><stop offset="1" stop-color="#f4e020" stop-opacity="0"/></radialGradient></defs><rect x="2" y="1.8" width="16.2" height="18.6" fill="url(#hp)"/><rect x="1.6" y="20" width="17" height="1" fill="#7a5a4c"/><rect x="1.4" y="1.8" width=".7" height="18.6" fill="#c9a090"/><circle cx="15.7" cy="5.2" r="5.2" fill="url(#hy)"/></svg>
<div class="t" style="left:43.60px;top:233px;font-size:14.1px;color:#ffffff;font-weight:bold;">Solver messages</div>
<svg class="a" style="left:340px;top:232px;" width="16" height="16" viewBox="0 0 16 16"><circle cx="8" cy="8" r="7.1" fill="#f7f6f4"/><path d="M4.2 7 L7.7 3.6 L11.2 7 M4.2 11 L7.7 7.6 L11.2 11" fill="none" stroke="#ee7040" stroke-width="1.5"/></svg>
<div class="a" style="left:14px;top:251.8px;width:345px;height:61.8px;background:#f2f1f0"></div>
<div class="t sf" style="left:26.40px;top:266px;font-size:13.05px;color:#333;">Under-constrained sketch with 2 degrees of freedom</div>
<div class="t sf" style="left:26.40px;top:288px;font-size:12.8px;color:#333;">Solved in 0 sec</div>
<div class="hdr" style="left:14px;top:322px;width:345px;height:24.8px"></div>
<svg class="a" style="left:19px;top:324px;" width="22" height="22" viewBox="0 0 22 22"><defs><linearGradient id="hp" x1="0" y1="0" x2="1" y2="1"><stop offset="0" stop-color="#e0e0e0"/><stop offset="1" stop-color="#f8f8f8"/></linearGradient><radialGradient id="hy"><stop offset="0" stop-color="#fffde8"/><stop offset=".3" stop-color="#f9ec2c"/><stop offset=".7" stop-color="#f6e424" stop-opacity=".9"/><stop offset="1" stop-color="#f4e020" stop-opacity="0"/></radialGradient></defs><rect x="2" y="1.8" width="16.2" height="18.6" fill="url(#hp)"/><rect x="1.6" y="20" width="17" height="1" fill="#7a5a4c"/><rect x="1.4" y="1.8" width=".7" height="18.6" fill="#c9a090"/><circle cx="15.7" cy="5.2" r="5.2" fill="url(#hy)"/></svg>
<div class="t" style="left:43.60px;top:328px;font-size:14.55px;color:#ffffff;font-weight:bold;">Edit controls</div>
<svg class="a" style="left:340px;top:327px;" width="16" height="16" viewBox="0 0 16 16"><circle cx="8" cy="8" r="7.1" fill="#f7f6f4"/><path d="M4.2 7 L7.7 3.6 L11.2 7 M4.2 11 L7.7 7.6 L11.2 11" fill="none" stroke="#ee7040" stroke-width="1.5"/></svg>
<div class="a" style="left:14px;top:346.8px;width:345px;height:108.8px;background:#f2f1f0"></div>
<div class="t" style="left:27.70px;top:367px;font-size:14.0px;color:#3c3c3c;">Grid size:</div>
<div class="btn" style="left:191px;top:361px;width:154px;height:25px;border-color:#aeaba5"></div>
<div class="t" style="left:197.70px;top:367px;font-size:14.0px;color:#3c3c3c;">10 mm</div>
<svg class="a" style="left:331px;top:367px;" width="10" height="16" viewBox="0 0 10 16"><path d="M1.6 5.8 L4.4 2.6 L7.2 5.8 Z M1.6 10.6 L4.4 13.8 L7.2 10.6 Z" fill="#5c5c5c"/></svg>
<div class="a" style="left:30px;top:397px;width:14px;height:14px;box-sizing:border-box;border:1px solid #a39e98;border-radius:3px;background:#fff"></div>
<div class="t" style="left:52.70px;top:397px;font-size:14.15px;color:#3c3c3c;">Grid snap</div>
<div class="a" style="left:30px;top:425px;width:14px;height:14px;box-sizing:border-box;border:1px solid #c2592a;border-radius:3px;background:linear-gradient(#f18a5c,#ea6a38)"></div>
<svg class="a" style="left:30px;top:423px;" width="18" height="18" viewBox="0 0 18 18"><path d="M3 8.6 L6.6 12.4 L14.8 3.4" fill="none" stroke="#6e2f1c" stroke-width="2"/></svg>
<div class="t" style="left:52.70px;top:424px;font-size:15.2px;color:#3c3c3c;">Auto constraints</div>
<div class="hdr" style="left:14px;top:464px;width:345px;height:24.8px"></div>
<svg class="a" style="left:19px;top:466px;" width="22" height="22" viewBox="0 0 22 22"><defs><linearGradient id="hp" x1="0" y1="0" x2="1" y2="1"><stop offset="0" stop-color="#e0e0e0"/><stop offset="1" stop-color="#f8f8f8"/></linearGradient><radialGradient id="hy"><stop offset="0" stop-color="#fffde8"/><stop offset=".3" stop-color="#f9ec2c"/><stop offset=".7" stop-color="#f6e424" stop-opacity=".9"/><stop offset="1" stop-color="#f4e020" stop-opacity="0"/></radialGradient></defs><rect x="2" y="1.8" width="16.2" height="18.6" fill="url(#hp)"/><rect x="1.6" y="20" width="17" height="1" fill="#7a5a4c"/><rect x="1.4" y="1.8" width=".7" height="18.6" fill="#c9a090"/><circle cx="15.7" cy="5.2" r="5.2" fill="url(#hy)"/></svg>
<div class="t" style="left:43.60px;top:470px;font-size:14.4px;color:#ffffff;font-weight:bold;">Constraints</div>
<svg class="a" style="left:340px;top:469px;" width="16" height="16" viewBox="0 0 16 16"><circle cx="8" cy="8" r="7.1" fill="#f7f6f4"/><path d="M4.2 7 L7.7 3.6 L11.2 7 M4.2 11 L7.7 7.6 L11.2 11" fill="none" stroke="#ee7040" stroke-width="1.5"/></svg>
<div class="a" style="left:14px;top:488.8px;width:345px;height:200.2px;background:#f2f1f0"></div>
<div class="t" style="left:26.70px;top:508px;font-size:15.2px;color:#3c3c3c;">Filter:</div>
<div class="btn" style="left:191px;top:503px;width:154px;height:25px;border-color:#aeaba5"></div>
<div class="t" style="left:196.50px;top:508px;font-size:15.15px;color:#3c3c3c;">Normal</div>
<svg class="a" style="left:331px;top:509px;" width="10" height="16" viewBox="0 0 10 16"><path d="M1.6 5.8 L4.4 2.6 L7.2 5.8 Z M1.6 10.6 L4.4 13.8 L7.2 10.6 Z" fill="#5c5c5c"/></svg>
<div class="a" style="left:27px;top:535px;width:303px;height:155px;box-sizing:border-box;border:1px solid #b3b0ab;border-bottom:none;background:#fff"></div>
<div class="a" style="left:333px;top:535px;width:13px;height:155px;box-sizing:border-box;border:1px solid #b9b6b1;border-bottom:none;border-radius:6.5px 6.5px 0 0;background:linear-gradient(90deg,#d6d4d0,#e9e8e6)"></div>
<div class="a" style="left:333px;top:535px;width:13px;height:14px;border-radius:6.5px 6.5px 0 0;background:#f7f6f5;box-sizing:border-box;border:1px solid #b9b6b1;border-bottom:none"></div>
<svg class="a" style="left:333px;top:536px;" width="13" height="13" viewBox="0 0 13 13"><path d="M4 8.2 L6.5 5.4 L9 8.2 Z" fill="#b5b2ad"/></svg>
<div class="a" style="left:333px;top:548px;width:13px;height:72px;box-sizing:border-box;border:1px solid #9b9893;border-radius:6.5px;background:linear-gradient(90deg,#ffffff,#f3f2f1 55%,#e3e1de)"></div>
<div class="a" style="left:338px;top:580px;width:3px;height:1px;background:#8f8c88"></div>
<div class="a" style="left:338px;top:583px;width:3px;height:1px;background:#8f8c88"></div>
<div class="a" style="left:338px;top:586px;width:3px;height:1px;background:#8f8c88"></div>
<div class="t" style="left:61.40px;top:542px;font-size:15.05px;color:#3c3c3c;">Constraint2</div>
<div class="t" style="left:61.40px;top:568px;font-size:15.05px;color:#3c3c3c;">Constraint4</div>
<div class="t" style="left:61.40px;top:594px;font-size:15.05px;color:#3c3c3c;">Constraint5</div>
<div class="t" style="left:61.40px;top:620px;font-size:15.05px;color:#3c3c3c;">Constraint6</div>
<div class="t" style="left:61.40px;top:646px;font-size:15.05px;color:#3c3c3c;">Constraint8</div>
<div class="t" style="left:61.40px;top:672px;font-size:15.05px;color:#3c3c3c;">Constraint9</div>
<svg class="a" style="left:0px;top:536px;overflow:hidden" width="330" height="153" viewBox="0 536 330 153"><rect x="32.2" y="546.6" width="21.8" height="5.2" fill="#a81a00"/><rect x="32.6" y="546.9" width="20.8" height="4.1" fill="#ff2600"/><rect x="32.2" y="572.6" width="21.8" height="5.2" fill="#a81a00"/><rect x="32.6" y="572.9" width="20.8" height="4.1" fill="#ff2600"/><path d="M40.2 591.2 H45.4 V605.4 H53.9 V610.0 H32.4 V605.4 H40.2 Z" fill="#ff2600" stroke="#a81a00" stroke-width=".6"/><path d="M40.2 617.2 H45.4 V631.4 H53.9 V636.0 H32.4 V631.4 H40.2 Z" fill="#ff2600" stroke="#a81a00" stroke-width=".6"/><rect x="40.7" y="642.0" width="4.2" height="21.4" fill="#ff2600" stroke="#a81a00" stroke-width=".6"/><rect x="40.7" y="668.0" width="4.2" height="21.4" fill="#ff2600" stroke="#a81a00" stroke-width=".6"/></svg>
<div class="a" style="left:392px;top:109px;width:821px;height:549px;background:linear-gradient(rgb(51,51,101),rgb(153,153,178))"></div>
<svg class="a" style="left:0px;top:0px;pointer-events:none" width="1218" height="694" viewBox="0 0 1218 694"><line x1="446.5" y1="149" x2="446.5" y2="545.5" stroke="#cfcfc8" stroke-width="1" stroke-dasharray="4.03 4.03" opacity=".85"/><line x1="503.5" y1="149" x2="503.5" y2="545.5" stroke="#cfcfc8" stroke-width="1" stroke-dasharray="4.03 4.03" opacity=".85"/><line x1="560.5" y1="149" x2="560.5" y2="545.5" stroke="#cfcfc8" stroke-width="1" stroke-dasharray="4.03 4.03" opacity=".85"/><line x1="617.5" y1="149" x2="617.5" y2="545.5" stroke="#cfcfc8" stroke-width="1" stroke-dasharray="4.03 4.03" opacity=".85"/><line x1="674.5" y1="149" x2="674.5" y2="545.5" stroke="#cfcfc8" stroke-width="1" stroke-dasharray="4.03 4.03" opacity=".85"/><line x1="731.5" y1="149" x2="731.5" y2="545.5" stroke="#cfcfc8" stroke-width="1" stroke-dasharray="4.03 4.03" opacity=".85"/><line x1="788.5" y1="149" x2="788.5" y2="545.5" stroke="#cfcfc8" stroke-width="1" stroke-dasharray="4.03 4.03" opacity=".85"/><line x1="845.5" y1="149" x2="845.5" y2="545.5" stroke="#cfcfc8" stroke-width="1" stroke-dasharray="4.03 4.03" opacity=".85"/><line x1="902.5" y1="149" x2="902.5" y2="545.5" stroke="#cfcfc8" stroke-width="1" stroke-dasharray="4.03 4.03" opacity=".85"/><line x1="959.5" y1="149" x2="959.5" y2="545.5" stroke="#cfcfc8" stroke-width="1" stroke-dasharray="4.03 4.03" opacity=".85"/><line x1="1016.5" y1="149" x2="1016.5" y2="545.5" stroke="#cfcfc8" stroke-width="1" stroke-dasharray="4.03 4.03" opacity=".85"/><line x1="1073.5" y1="149" x2="1073.5" y2="545.5" stroke="#cfcfc8" stroke-width="1" stroke-dasharray="4.03 4.03" opacity=".85"/><line x1="1131.5" y1="149" x2="1131.5" y2="545.5" stroke="#cfcfc8" stroke-width="1" stroke-dasharray="4.03 4.03" opacity=".85"/><line x1="1188.5" y1="149" x2="1188.5" y2="545.5" stroke="#cfcfc8" stroke-width="1" stroke-dasharray="4.03 4.03" opacity=".85"/><line x1="392" y1="202.5" x2="1210" y2="202.5" stroke="#cfcfc8" stroke-width="1" stroke-dasharray="4.03 4.03" stroke-dashoffset="3" opacity=".85"/><line x1="392" y1="259.5" x2="1210" y2="259.5" stroke="#cfcfc8" stroke-width="1" stroke-dasharray="4.03 4.03" stroke-dashoffset="3" opacity=".85"/><line x1="392" y1="316.5" x2="1210" y2="316.5" stroke="#cfcfc8" stroke-width="1" stroke-dasharray="4.03 4.03" stroke-dashoffset="3" opacity=".85"/><line x1="392" y1="373.5" x2="1210" y2="373.5" stroke="#cfcfc8" stroke-width="1" stroke-dasharray="4.03 4.03" stroke-dashoffset="3" opacity=".85"/><line x1="392" y1="430.5" x2="1210" y2="430.5" stroke="#cfcfc8" stroke-width="1" stroke-dasharray="4.03 4.03" stroke-dashoffset="3" opacity=".85"/><line x1="392" y1="545.5" x2="1210" y2="545.5" stroke="#cfcfc8" stroke-width="1" stroke-dasharray="4.03 4.03" stroke-dashoffset="3" opacity=".85"/><line x1="392" y1="488.4" x2="1213" y2="488.4" stroke="#cd6464" stroke-width="1.7"/><line x1="788.8" y1="177" x2="788.8" y2="529.5" stroke="#55cf66" stroke-width="2"/><line x1="594.0" y1="281" x2="594.0" y2="488.4" stroke="#ff2600" stroke-width="2"/><line x1="617.0" y1="281" x2="617.0" y2="488.4" stroke="#ff2600" stroke-width="2"/><line x1="568" y1="287" x2="594.0" y2="287" stroke="#ff2600" stroke-width="2"/><line x1="617.0" y1="287" x2="630" y2="287" stroke="#ff2600" stroke-width="2"/><path d="M593.2 287 L588.0 284 V290 Z M617.8 287 L623.0 284 V290 Z" fill="#ff2600"/><text x="633.6" y="290.6" font-family="Liberation Serif, serif" font-size="12.8" fill="#c92c10">4.00</text><path d="M593.5 488.4 A195.5 195.5 0 0 1 984.5 488.4" stroke="#ffffff" stroke-width="2.9" fill="none"/><path d="M616.5 488.4 A172.5 172.5 0 0 1 961.5 488.4" stroke="#ffffff" stroke-width="2.9" fill="none"/><path d="M593.5 488.4 H433.4 V510.5 H616.5 V488.4" stroke="#ffffff" stroke-width="2.9" fill="none"/><path d="M984.5 488.4 H1144.5 V510.5 H961.5 V488.4" stroke="#ffffff" stroke-width="2.9" fill="none"/><line x1="593.5" y1="488.4" x2="616.5" y2="488.4" stroke="#0000cc" stroke-width="3"/><line x1="594.0" y1="440" x2="594.0" y2="488.4" stroke="#ff2600" stroke-width="2"/><line x1="617.0" y1="440" x2="617.0" y2="488.4" stroke="#ff2600" stroke-width="2"/><path d="M788.8 337 L792.8 356.4 H784.8 Z" fill="#20207c"/><path d="M939.4 488.4 L926 486.9 L920.6 484.9 V491.9 L926 489.9 Z" fill="#6e2226"/><rect x="919.8" y="484.4" width="1.3" height="8" fill="#4a1a1e"/><rect x="417.1" y="493.0" width="2.9" height="13.9" fill="#ff2600"/><rect x="1128.3" y="493.0" width="2.9" height="13.9" fill="#ff2600"/><rect x="782.0" y="273.2" width="4.2" height="13.8" fill="#ff2600"/><rect x="777.0" y="283.4" width="13.8" height="3.6" fill="#ff2600"/><text x="792.3" y="287.8" font-family="Liberation Sans, sans-serif" font-size="10" fill="#e8260a" stroke="#e8260a" stroke-width=".3">5</text><rect x="506.9" y="495.1" width="4.2" height="10.4" fill="#ff2600"/><rect x="506.1" y="500.0" width="13.9" height="3.2" fill="#ff2600"/><rect x="502.0" y="505.2" width="13.6" height="3.6" fill="#ff2600"/><text x="517.4" y="509.7" font-family="Liberation Sans, sans-serif" font-size="10" fill="#e8260a" stroke="#e8260a" stroke-width=".3">5</text><rect x="505.9" y="519.1" width="10.1" height="3.8" fill="#ff2600"/><rect x="505.9" y="526.0" width="10.1" height="3.8" fill="#ff2600"/><rect x="517.0" y="523.2" width="14.1" height="3.4" fill="#ff2600"/><text x="519.4" y="533.0" font-family="Liberation Sans, sans-serif" font-size="10" fill="#e8260a" stroke="#e8260a" stroke-width=".3">25</text><rect x="587.0" y="469.1" width="10.0" height="3.9" fill="#ff2600"/><rect x="587.0" y="476.0" width="10.0" height="3.9" fill="#ff2600"/><text x="600.2" y="482.8" font-family="Liberation Sans, sans-serif" font-size="10" fill="#e8260a" stroke="#e8260a" stroke-width=".3">28</text><rect x="612.2" y="494.2" width="13.6" height="3.7" fill="#ff2600"/><rect x="612.2" y="501.2" width="13.6" height="3.7" fill="#ff2600"/><path d="M623 482.4 L633.6 492.2" stroke="#ff2600" stroke-width="2.4" fill="none"/><path d="M617 488.6 C623 484.6 629.6 489 629.6 501.4" stroke="#ff2600" stroke-width="2.4" fill="none"/><text x="625.6" y="508.2" font-family="Liberation Sans, sans-serif" font-size="10" fill="#e8260a" stroke="#e8260a" stroke-width=".3">28</text><text x="629.2" y="508.2" font-family="Liberation Sans, sans-serif" font-size="10" fill="#e8260a" stroke="#e8260a" stroke-width=".3">84</text><rect x="1057.9" y="467.9" width="4.2" height="10.4" fill="#ff2600"/><rect x="1057.1" y="473.1" width="13.9" height="3.5" fill="#ff2600"/><rect x="1052.9" y="478.2" width="13.7" height="3.6" fill="#ff2600"/><text x="1068.4" y="483.1" font-family="Liberation Sans, sans-serif" font-size="10" fill="#e8260a" stroke="#e8260a" stroke-width=".3">6</text><rect x="1034.0" y="492.1" width="10.0" height="3.7" fill="#ff2600"/><rect x="1034.0" y="499.2" width="10.0" height="3.8" fill="#ff2600"/><rect x="1045.0" y="496.1" width="14.1" height="3.5" fill="#ff2600"/><text x="1047.4" y="506.1" font-family="Liberation Sans, sans-serif" font-size="10" fill="#e8260a" stroke="#e8260a" stroke-width=".3">25</text><rect x="960.6" y="494.2" width="10.0" height="3.7" fill="#ff2600"/><rect x="960.6" y="501.2" width="10.0" height="3.7" fill="#ff2600"/><path d="M968.6 482.4 L978.6 492.2" stroke="#ff2600" stroke-width="2.4" fill="none"/><path d="M962 488.6 C968 484.6 974.4 489 974.4 506.4" stroke="#ff2600" stroke-width="2.6" fill="none"/><text x="974.6" y="508.2" font-family="Liberation Sans, sans-serif" font-size="10" fill="#e8260a" stroke="#e8260a" stroke-width=".3">14</text><circle cx="433.4" cy="488.4" r="3.3" fill="#ff2600"/><circle cx="433.4" cy="510.5" r="3.3" fill="#ff2600"/><circle cx="593.5" cy="488.4" r="3.3" fill="#ff2600"/><circle cx="616.5" cy="488.4" r="3.3" fill="#ff2600"/><circle cx="616.5" cy="510.5" r="3.3" fill="#ff2600"/><circle cx="788.8" cy="488.4" r="3.3" fill="#ff2600"/><circle cx="961.5" cy="488.4" r="3.3" fill="#ff2600"/><circle cx="984.5" cy="488.4" r="3.3" fill="#ff2600"/><circle cx="961.5" cy="510.5" r="3.3" fill="#ff2600"/><circle cx="1144.5" cy="488.4" r="3.3" fill="#ff2600"/><circle cx="1144.5" cy="510.5" r="3.3" fill="#ff2600"/><line x1="1186.1" y1="612" x2="1186.1" y2="631.6" stroke="#20208a" stroke-width="2"/><rect x="1184.2" y="615.4" width="3.9" height="4" fill="#20208a"/><line x1="1186" y1="630.8" x2="1205" y2="630.8" stroke="#9c1a1a" stroke-width="1.8"/><rect x="1197.6" y="629" width="3.8" height="3.7" fill="#9c1a1a"/><rect x="1185" y="631" width="1.2" height="1.2" fill="#20a020"/><text x="1188.6" y="612.8" font-family="Liberation Sans, sans-serif" font-size="9.2" fill="#000">Z</text><text x="1188.4" y="630.8" font-family="Liberation Sans, sans-serif" font-size="9.2" fill="#000">Y</text><text x="1206.6" y="630.8" font-family="Liberation Sans, sans-serif" font-size="9.2" fill="#000">X</text></svg>
<div class="a" style="left:392px;top:658px;width:821px;height:32px;background:#f2f1f0"></div>
<div class="a" style="left:392px;top:657.5px;width:111px;height:30px;box-sizing:border-box;border:1px solid #b3b0ab;border-top:none;border-radius:0 0 5px 5px;background:linear-gradient(#dcdad7,#ecebe9 60%,#f1f0ee)"></div>
<div class="a" style="left:502.5px;top:657.5px;width:155.5px;height:32.7px;box-sizing:border-box;border:1px solid #b3b0ab;border-top:none;border-radius:0 0 5px 5px;background:#fbfbfa"></div>
<div class="t" style="left:400.50px;top:667px;font-size:14.8px;color:#3c3c3c;">Start page</div>
<div class="t" style="left:532.60px;top:668px;font-size:14.5px;color:#3c3c3c;">Unnamed : 1*</div>
<svg class="a" style="left:477px;top:667px;" width="14" height="14" viewBox="0 0 14 14"><path d="M2.2 2.2 L11.8 11.8 M11.8 2.2 L2.2 11.8" stroke="#555553" stroke-width="2.9"/></svg>
<svg class="a" style="left:633px;top:668px;" width="14" height="14" viewBox="0 0 14 14"><path d="M2.2 2.2 L11.8 11.8 M11.8 2.2 L2.2 11.8" stroke="#555553" stroke-width="2.9"/></svg>
<svg class="a" style="left:509.6px;top:667px;" width="16" height="15" viewBox="0 0 16 15"><path d="M.6 .6 H8 V3.6 H4 V5.8 H7 V8.6 H4 V12.6 H.6 Z" fill="#ee2a10" stroke="#a81808" stroke-width=".5"/><rect x="8.8" y="4" width="2" height="9.6" fill="#1030b0" transform="rotate(0 9.8 8.8)"/><rect x="8.8" y="4" width="2" height="9.6" fill="#1030b0" transform="rotate(45 9.8 8.8)"/><rect x="8.8" y="4" width="2" height="9.6" fill="#1030b0" transform="rotate(90 9.8 8.8)"/><rect x="8.8" y="4" width="2" height="9.6" fill="#1030b0" transform="rotate(135 9.8 8.8)"/><circle cx="9.8" cy="8.8" r="3.4" fill="#1030b0"/><circle cx="9.8" cy="8.8" r="1.4" fill="#fbfbfa"/></svg>
</body></html>
